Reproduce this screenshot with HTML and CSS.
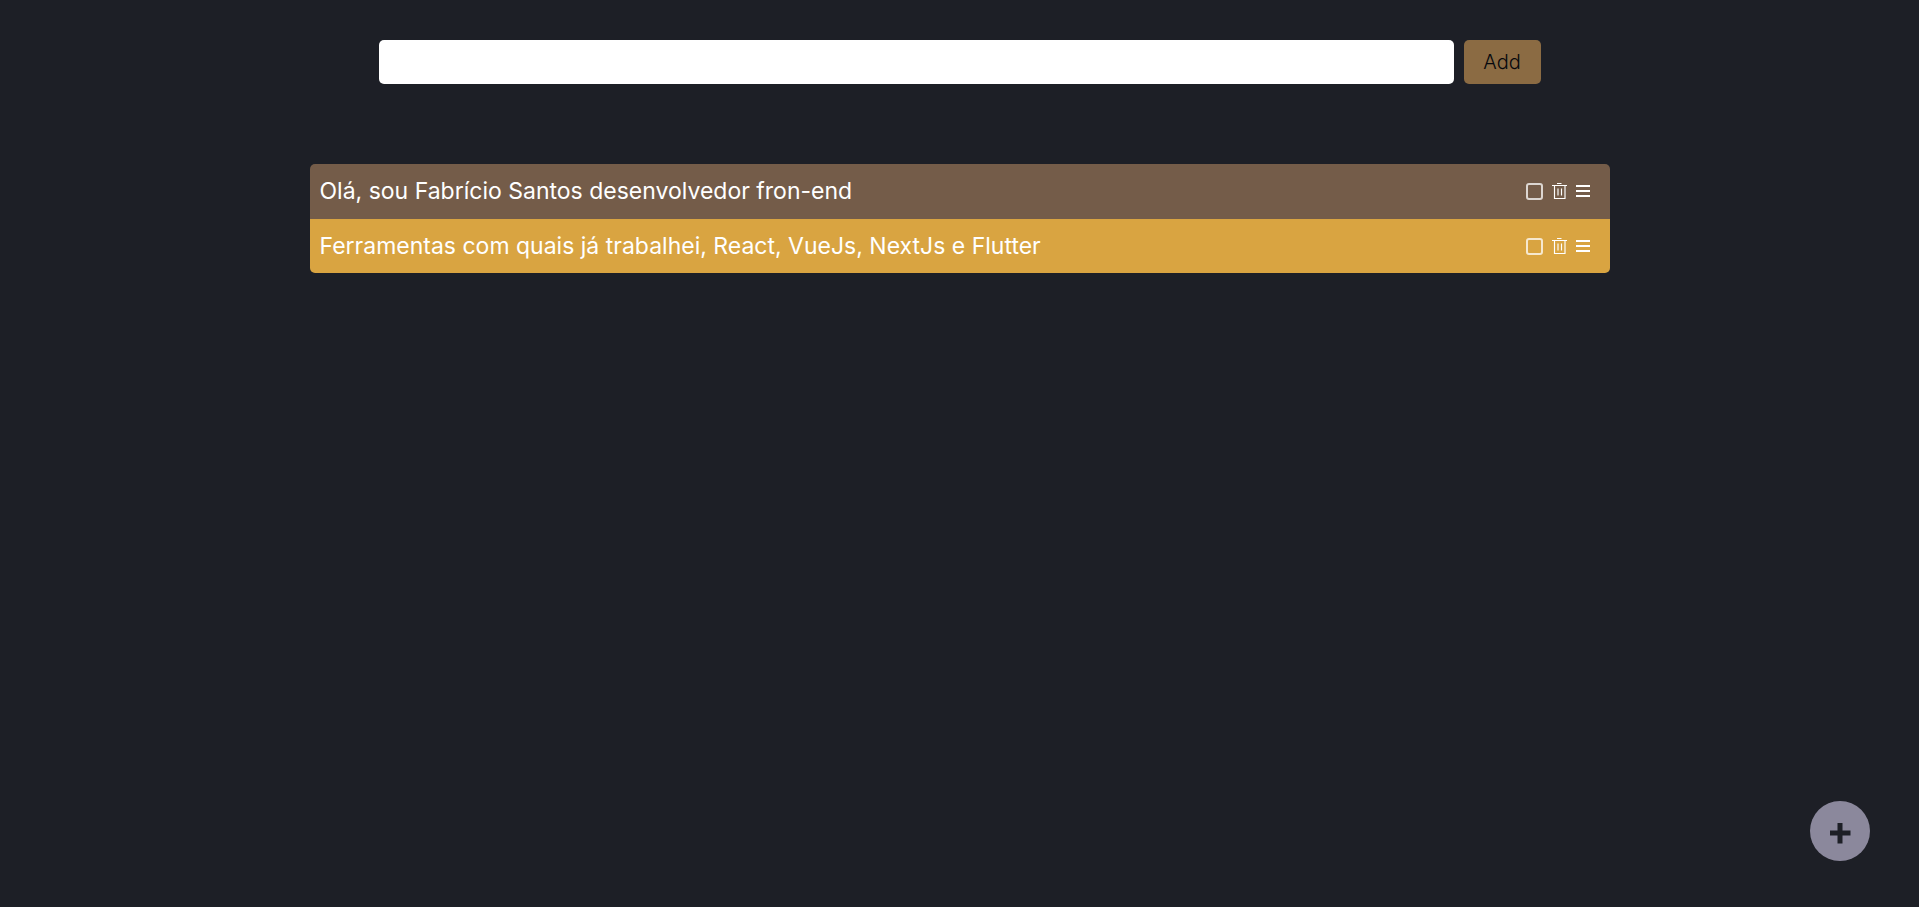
FILE: index.html
```html
<!DOCTYPE html>
<html lang="pt-BR">
<head>
<meta charset="utf-8">
<meta name="viewport" content="width=device-width, initial-scale=1">
<title>Tarefas</title>
<link rel="stylesheet" href="styles.css">
</head>
<body>
<main class="page">
  <form class="entry">
    <input class="entry-field" type="text" aria-label="Nova tarefa">
    <button class="entry-add" type="button">Add</button>
  </form>
  <ul class="tasks">
    <li class="task task-brown">
      <span class="task-text">Olá, sou Fabrício Santos desenvolvedor fron-end</span>
      <span class="task-tools">
        <input class="check" type="checkbox" aria-label="Concluir">
        <button class="tool" type="button" aria-label="Excluir"><svg width="17" height="18" viewBox="0 0 17 18"><path d="M6 1.500h4.500M1 3.500h15M3.500 4v12.500h10.500v-12.500M7 6.500v7M10.500 6.500v7"/></svg></button>
        <button class="tool" type="button" aria-label="Mover"><svg width="14" height="18" viewBox="0 0 14 18"><path class="bars" d="M0 4h14M0 9h14M0 14h14"/></svg></button>
      </span>
    </li>
    <li class="task task-gold">
      <span class="task-text">Ferramentas com quais já trabalhei, React, VueJs, NextJs e Flutter</span>
      <span class="task-tools">
        <input class="check" type="checkbox" aria-label="Concluir">
        <button class="tool" type="button" aria-label="Excluir"><svg width="17" height="18" viewBox="0 0 17 18"><path d="M6 1.500h4.500M1 3.500h15M3.500 4v12.500h10.500v-12.500M7 6.500v7M10.500 6.500v7"/></svg></button>
        <button class="tool" type="button" aria-label="Mover"><svg width="14" height="18" viewBox="0 0 14 18"><path class="bars" d="M0 4h14M0 9h14M0 14h14"/></svg></button>
      </span>
    </li>
  </ul>
</main>
<button class="fab" type="button" aria-label="Adicionar"><svg width="60" height="60" viewBox="0 0 60 60"><path d="M20 32h20.500M30 22v20.500"/></svg></button>
</body>
</html>
```
FILE: styles.css
```css
body {
  margin: 0;
  background: #1d1f26;
  color: #fff;
  font-family: Inter, sans-serif;
}

.page {
  padding: 40px 0;
}

.entry {
  display: flex;
  gap: 10px;
  max-width: 1162px;
  margin: 0 auto 80px;
}

.entry-field {
  flex: 1;
  min-width: 0;
  height: 44px;
  box-sizing: border-box;
  border: 0;
  border-radius: 5px;
  padding: 0 10px;
  font: 20px/24px Inter, sans-serif;
}

.entry-add {
  width: 77px;
  padding: 0;
  border: 0;
  border-radius: 5px;
  background: #8b6b43;
  color: #06080e;
  font: 300 20px/24px Inter, sans-serif;
}

.tasks {
  max-width: 1300px;
  margin: 0 auto;
  padding: 0;
  border-radius: 5px;
  overflow: hidden;
  list-style: none;
}

.task {
  display: flex;
  align-items: center;
  justify-content: space-between;
  padding: 12px 20px 12px 10px;
  font-size: 23px;
  line-height: 30px;
}

.task-brown {
  background: #745c49;
  border-bottom: 1px solid #745c49;
}

.task-gold {
  background: #d9a441;
}

.task-tools {
  display: flex;
  align-items: center;
  gap: 8px;
}

.check {
  appearance: none;
  width: 17px;
  height: 17px;
  margin: 0;
  box-sizing: border-box;
  border: 2px solid rgba(255, 255, 255, 0.75);
  border-radius: 3px;
}

.tool {
  display: flex;
  padding: 0;
  border: 0;
  background: none;
  color: #fff;
}

.tool path {
  fill: none;
  stroke: currentColor;
  stroke-width: 1.15;
}

.tool .bars {
  stroke-width: 2;
}

.fab {
  position: fixed;
  right: 49px;
  bottom: 46px;
  width: 60px;
  height: 60px;
  padding: 0;
  border: 0;
  border-radius: 50%;
  background: #8b889c;
}

.fab svg {
  display: block;
  stroke: #1d1f26;
  stroke-width: 5;
}
```
